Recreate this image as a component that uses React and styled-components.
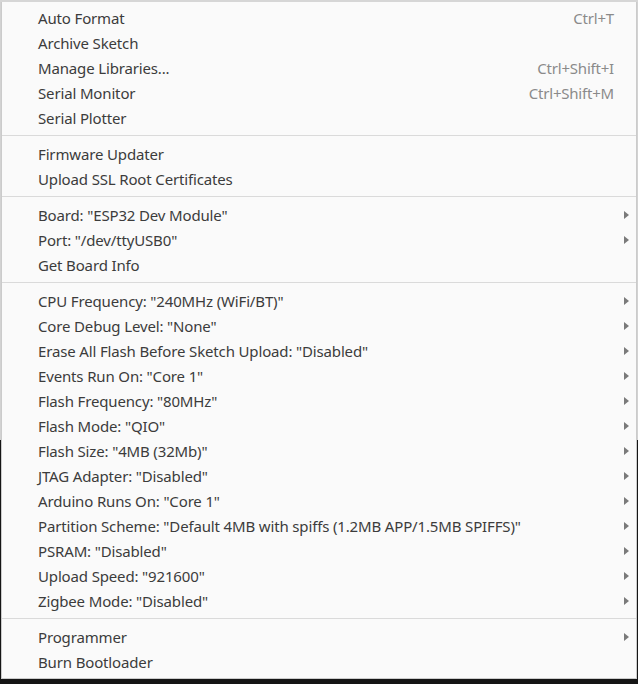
import React from 'react';
import styled, { createGlobalStyle } from 'styled-components';

const GlobalStyle = createGlobalStyle`
  html, body {
    margin: 0;
    padding: 0;
    background: #0d0d0d;
  }
  body {
    font-family: "Noto Sans", "Open Sans", sans-serif;
  }
`;

const Screen = styled.div`
  width: 638px;
  height: 684px;
  display: flex;
  flex-direction: column;
  background: linear-gradient(to bottom, #d2d2d2 0, #d2d2d2 440px, #151515 440px);
`;

const TopStrip = styled.div`
  height: 2px;
  background: #d6d6d6;
`;

const Menu = styled.ul`
  list-style: none;
  margin: 0 1px 0 1px;
  padding: 3px 0 4px;
  width: 634px;
  box-sizing: content-box;
  background: #fafafa;
  border: 1px solid #cbcbcb;
  border-top: none;
  color: #3c3c3c;
  font-size: 15px;
`;

const Row = styled.li`
  display: grid;
  grid-template-columns: 1fr auto 16px;
  align-items: center;
  height: 25px;
  padding: 0 6px 0 36px;
  white-space: nowrap;
`;

const Label = styled.span`
  letter-spacing: -0.15px;
`;

const Shortcut = styled.span`
  color: #8a8a8a;
  letter-spacing: -0.2px;
`;

const Arrow = styled.span`
  justify-self: end;
  width: 0;
  height: 0;
  border-top: 4px solid transparent;
  border-bottom: 4px solid transparent;
  border-left: 5px solid #7a7a7a;
  margin-right: 1px;
`;

const Separator = styled.li`
  height: 1px;
  margin: 5px 0;
  background: #dadada;
`;

const groups = [
  [
    { label: 'Auto Format', shortcut: 'Ctrl+T' },
    { label: 'Archive Sketch' },
    { label: 'Manage Libraries...', shortcut: 'Ctrl+Shift+I' },
    { label: 'Serial Monitor', shortcut: 'Ctrl+Shift+M' },
    { label: 'Serial Plotter' },
  ],
  [
    { label: 'Firmware Updater' },
    { label: 'Upload SSL Root Certificates' },
  ],
  [
    { label: 'Board: "ESP32 Dev Module"', sub: true },
    { label: 'Port: "/dev/ttyUSB0"', sub: true },
    { label: 'Get Board Info' },
  ],
  [
    { label: 'CPU Frequency: "240MHz (WiFi/BT)"', sub: true },
    { label: 'Core Debug Level: "None"', sub: true },
    { label: 'Erase All Flash Before Sketch Upload: "Disabled"', sub: true },
    { label: 'Events Run On: "Core 1"', sub: true },
    { label: 'Flash Frequency: "80MHz"', sub: true },
    { label: 'Flash Mode: "QIO"', sub: true },
    { label: 'Flash Size: "4MB (32Mb)"', sub: true },
    { label: 'JTAG Adapter: "Disabled"', sub: true },
    { label: 'Arduino Runs On: "Core 1"', sub: true },
    { label: 'Partition Scheme: "Default 4MB with spiffs (1.2MB APP/1.5MB SPIFFS)"', sub: true },
    { label: 'PSRAM: "Disabled"', sub: true },
    { label: 'Upload Speed: "921600"', sub: true },
    { label: 'Zigbee Mode: "Disabled"', sub: true },
  ],
  [
    { label: 'Programmer', sub: true },
    { label: 'Burn Bootloader' },
  ],
];

export default function App() {
  return (
    <>
      <GlobalStyle />
      <Screen>
        <TopStrip />
        <Menu>
          {groups.map((items, g) => (
            <React.Fragment key={g}>
              {g > 0 && <Separator />}
              {items.map((item) => (
                <Row key={item.label}>
                  <Label>{item.label}</Label>
                  {item.shortcut ? <Shortcut>{item.shortcut}</Shortcut> : <span />}
                  {item.sub ? <Arrow /> : <span />}
                </Row>
              ))}
            </React.Fragment>
          ))}
        </Menu>
      </Screen>
    </>
  );
}
